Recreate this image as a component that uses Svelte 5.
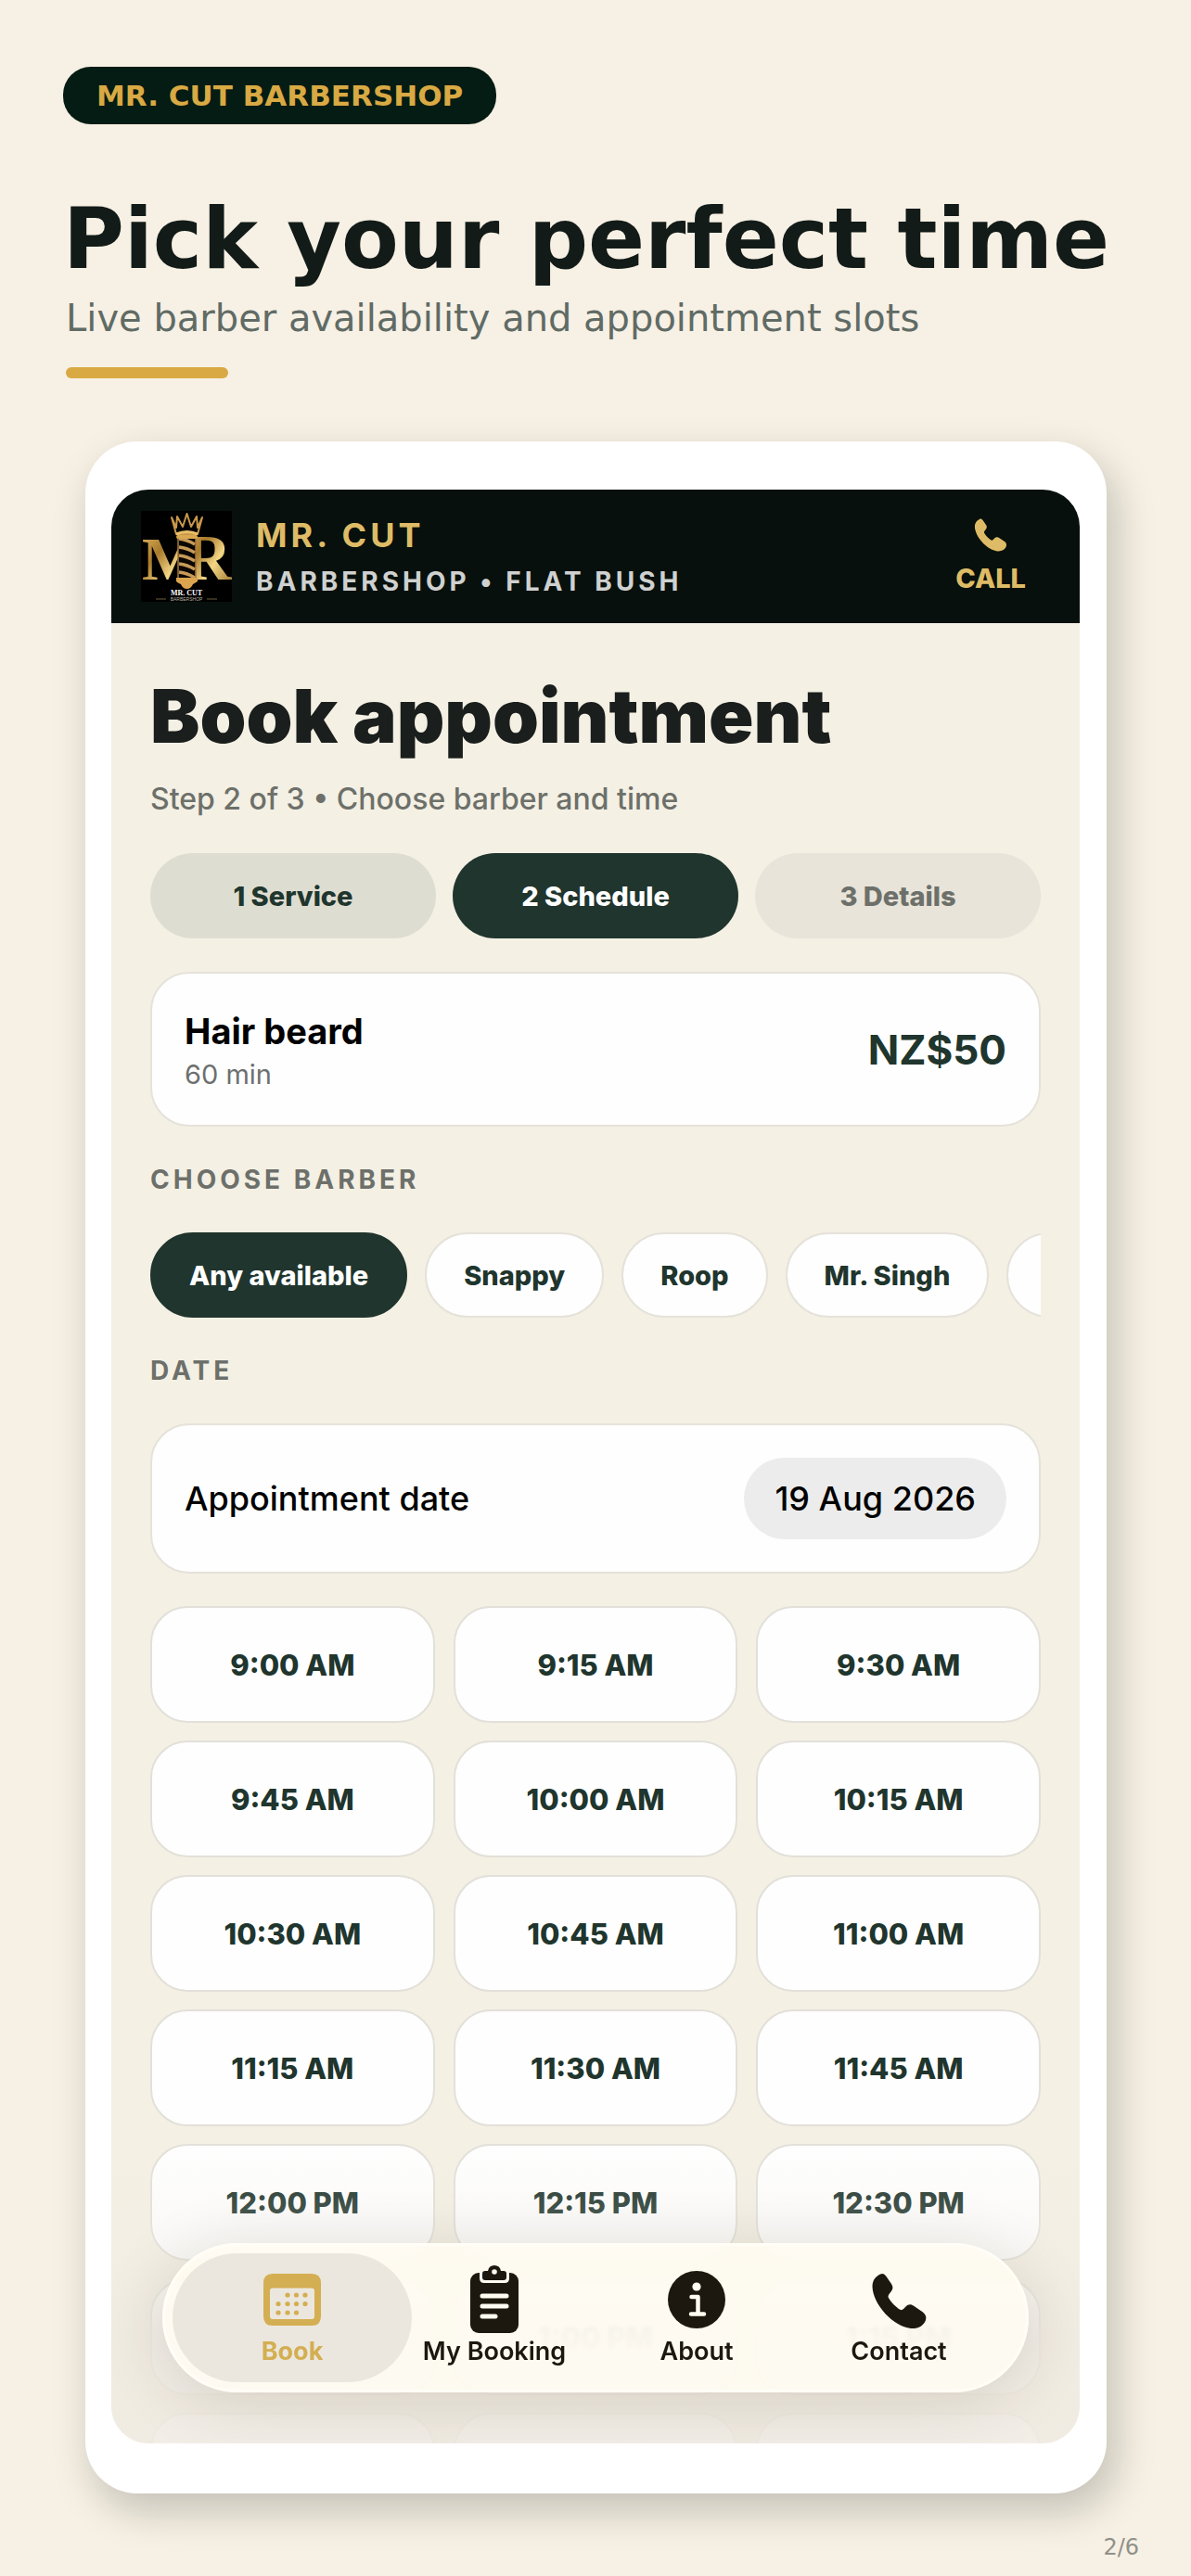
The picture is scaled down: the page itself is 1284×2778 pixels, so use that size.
<script>
  const steps = [
    { label: '1 Service', state: 'done' },
    { label: '2 Schedule', state: 'current' },
    { label: '3 Details', state: 'next' }
  ];
  const barbers = ['Any available', 'Snappy', 'Roop', 'Mr. Singh', 'More'];
  let barber = $state('Any available');

  const slots = Array.from({ length: 21 }, (_, i) => {
    const minutes = 9 * 60 + i * 15;
    const hour = Math.floor(minutes / 60);
    const mm = String(minutes % 60).padStart(2, '0');
    return `${hour > 12 ? hour - 12 : hour}:${mm} ${hour < 12 ? 'AM' : 'PM'}`;
  });

  const tabs = [
    { id: 'book', label: 'Book' },
    { id: 'booking', label: 'My Booking' },
    { id: 'about', label: 'About' },
    { id: 'contact', label: 'Contact' }
  ];
</script>

{#snippet phone()}
  <path d="M10 1.5C5 4 1.500 8 1.500 15C2 34 24 58 43 60C51 60.500 57 57 59 51C60 47.500 59 45 56 42.500L46.500 36C43 33.500 40 34 37.500 36.500L35 39C33.500 40.500 32 40.500 30 39C26 36 22 32 19.500 28C18 26 18.500 24.500 19.500 23L21.500 20.500C24 17.500 24 15 22 12L16.500 4C14.500 1 12.500 0.300 10 1.500Z" fill="currentColor" />
{/snippet}

<div class="page">
  <span class="tag">MR. CUT BARBERSHOP</span>
  <h1>Pick your perfect time</h1>
  <p class="lead">Live barber availability and appointment slots</p>
  <div class="rule"></div>

  <div class="frame">
    <div class="screen">
      <header>
        <svg class="logo" viewBox="0 0 98 98" role="img" aria-label="Mr. Cut logo">
          <defs>
            <linearGradient id="gold" x1="0" y1="0" x2="1" y2="1">
              <stop offset="0" stop-color="#e9c069" />
              <stop offset=".35" stop-color="#a87a2c" />
              <stop offset=".6" stop-color="#f3d685" />
              <stop offset="1" stop-color="#8a5f1d" />
            </linearGradient>
          </defs>
          <rect width="98" height="98" fill="#000" />
          <g fill="url(#gold)" font-family="Liberation Serif, serif" font-weight="700">
            <text x="1" y="74" font-size="66">M</text>
            <text x="47" y="74" font-size="70">R</text>
          </g>
          <path d="M33 7L38 18L39 6L45 17L49.500 3L54 17L60 6L61 18L66 7L61 25H38Z" fill="#000" stroke="#c8984a" stroke-width="2" stroke-linejoin="round" />
          <path d="M38 25Q49.500 20 61 25" fill="none" stroke="#e9c069" stroke-width="3" />
          <rect x="40" y="27" width="19" height="46" fill="#0b0703" stroke="#a87a3c" stroke-width="1.500" />
          <g stroke="#c79a58" stroke-width="3.500" fill="none">
            <path d="M41 30Q50 31 58 36M41 39Q50 40 58 45M41 48Q50 49 58 54M41 57Q50 58 58 63M41 66Q50 67 58 72" />
          </g>
          <rect x="38" y="26" width="23" height="4" rx="2" fill="#d9a850" />
          <path d="M38 72H61V76Q58 78 56 79Q54 84 49.500 84Q45 84 43 79Q40 78 38 76Z" fill="#dca44e" />
          <text x="49" y="91" font-size="8" font-weight="700" font-family="Liberation Serif, serif" fill="#fff" text-anchor="middle">MR. CUT</text>
          <text x="49" y="97" font-size="5" font-family="Liberation Sans, sans-serif" fill="#b9b1a2" text-anchor="middle">BARBERSHOP</text>
          <path d="M16 95H27M71 95H82" stroke="#6d5c3c" />
        </svg>
        <div class="brand">
          <strong>MR. CUT</strong>
          <span>BARBERSHOP • FLAT BUSH</span>
        </div>
        <a class="call" href="tel:">
          <svg viewBox="0 0 61 61" aria-hidden="true">{@render phone()}</svg>
          <span>CALL</span>
        </a>
      </header>

      <main>
        <div class="heading">
          <h2>Book appointment</h2>
          <p>Step 2 of 3 • Choose barber and time</p>
        </div>

        <div class="steps">
          {#each steps as step}
            <button type="button" class={step.state} aria-current={step.state === 'current' ? 'step' : undefined}>{step.label}</button>
          {/each}
        </div>

        <section class="card">
          <div>
            <h3>Hair beard</h3>
            <p>60 min</p>
          </div>
          <span class="price">NZ$50</span>
        </section>

        <h4>CHOOSE BARBER</h4>
        <div class="chips">
          {#each barbers as name}
            <button type="button" class:selected={barber === name} aria-pressed={barber === name} onclick={() => (barber = name)}>{name}</button>
          {/each}
        </div>

        <h4>DATE</h4>
        <div class="card date">
          <label for="date">Appointment date</label>
          <button type="button" id="date">19 Aug 2026</button>
        </div>

        <div class="slots">
          {#each slots as slot}
            <button type="button">{slot}</button>
          {/each}
        </div>
      </main>

      <div class="fade"></div>

      <nav>
        {#each tabs as tab}
          <a href="#{tab.id}" class:active={tab.id === 'book'}>
            {#if tab.id === 'book'}
              <svg viewBox="0 0 74 74" aria-hidden="true">
                <path fill="currentColor" fill-rule="evenodd" d="M16 9H58Q68 9 68 19V55Q68 65 58 65H16Q6 65 6 55V19Q6 9 16 9ZM16 24.500Q13 24.500 13 27.500V55Q13 58 16 58H58Q61 58 61 55V27.500Q61 24.500 58 24.500Z" />
                <g fill="currentColor">
                  {#each [[32, 32], [41.5, 32], [51, 32], [22, 41.5], [32, 41.5], [41.5, 41.5], [51, 41.5], [22, 51], [32, 51], [41.5, 51]] as [cx, cy]}
                    <circle {cx} {cy} r="2.600" />
                  {/each}
                </g>
              </svg>
            {:else if tab.id === 'booking'}
              <svg viewBox="0 0 74 74" aria-hidden="true">
                <rect x="11" y="8" width="52" height="65" rx="9" fill="currentColor" />
                <path d="M21 7V14Q21 19 26 19H48Q53 19 53 14V7" fill="#fffcf2" />
                <path d="M27 6H30Q31 0 37 0Q43 0 44 6H47Q50 6 50 9V13Q50 16 47 16H27Q24 16 24 13V9Q24 6 27 6Z" fill="currentColor" />
                <circle cx="37" cy="7" r="2.800" fill="#fffcf2" />
                <path d="M24 33H50M24 44H50M24 55H38" stroke="#fffcf2" stroke-width="5" stroke-linecap="round" />
              </svg>
            {:else if tab.id === 'about'}
              <svg viewBox="0 0 74 74" aria-hidden="true">
                <circle cx="37" cy="37" r="31" fill="currentColor" />
                <circle cx="37" cy="23" r="4.600" fill="#fffcf2" />
                <path d="M31.500 34H38.500V52M31 52.500H45" fill="none" stroke="#fffcf2" stroke-width="4.500" stroke-linecap="round" stroke-linejoin="round" />
              </svg>
            {:else}
              <svg viewBox="-7 -8 74 74" aria-hidden="true">{@render phone()}</svg>
            {/if}
            <span>{tab.label}</span>
          </a>
        {/each}
      </nav>
    </div>
  </div>

  <footer>2/6</footer>
</div>

<style>
  :global(body) {
    background: #f7f0e4;
  }
  .page {
    box-sizing: border-box;
    height: 100vh;
    padding: 72px 56px 16px 68px;
    display: flex;
    flex-direction: column;
    background: #f7f0e4;
    font-family: 'DejaVu Sans', sans-serif;
  }
  h1, h2, h3, h4, p {
    margin: 0;
  }
  button {
    margin: 0;
    padding: 0;
    border: 0;
    font: inherit;
    cursor: pointer;
  }
  a {
    text-decoration: none;
  }
  .tag {
    align-self: flex-start;
    padding: 0 36px;
    border-radius: 30px;
    background: #051c14;
    color: #d9a943;
    font-size: 31px;
    font-weight: 700;
    line-height: 62px;
  }
  h1 {
    margin-top: 72px;
    color: #121b18;
    font-size: 90px;
    font-weight: 700;
    line-height: 104px;
    white-space: nowrap;
  }
  .lead {
    margin: 9px 0 29px 3px;
    color: #606b65;
    font-size: 40px;
    line-height: 48px;
  }
  .rule {
    flex: none;
    width: 175px;
    height: 12px;
    margin-left: 3px;
    border-radius: 6px;
    background: #d9a943;
  }
  .frame {
    flex: 1;
    min-height: 0;
    margin: 68px 35px 43px 24px;
    padding: 52px 29px 54px 28px;
    box-sizing: border-box;
    display: flex;
    border-radius: 56px;
    background: #fff;
    box-shadow: 9px 18px 44px rgba(10, 24, 16, 0.22);
  }
  .screen {
    position: relative;
    flex: 1;
    min-width: 0;
    display: flex;
    flex-direction: column;
    overflow: hidden;
    border-radius: 40px;
    background: #f4f0e4;
    font-family: Inter, sans-serif;
  }
  header {
    flex: none;
    display: flex;
    align-items: center;
    padding: 22px 58px 22px 32px;
    background: #07100c;
  }
  .logo {
    width: 98px;
    height: 98px;
  }
  .brand {
    flex: 1;
    display: flex;
    flex-direction: column;
    margin-left: 26px;
  }
  .brand strong {
    color: #debb66;
    font-size: 36px;
    font-weight: 700;
    line-height: 54px;
    letter-spacing: 4px;
  }
  .brand span {
    color: #cfd1d0;
    font-size: 28px;
    font-weight: 700;
    line-height: 46px;
    letter-spacing: 4px;
  }
  .call {
    display: flex;
    flex-direction: column;
    align-items: center;
    gap: 12px;
    color: #debb66;
    font-size: 29px;
    font-weight: 800;
    line-height: 34px;
  }
  .call svg {
    width: 36px;
    height: 36px;
  }
  main {
    flex: 1;
    min-height: 0;
    overflow: hidden;
    padding: 52px 42px 0;
  }
  h2 {
    color: #1a1e1c;
    font-size: 80px;
    font-weight: 900;
    line-height: 96px;
  }
  .heading p {
    margin-top: 20px;
    color: #6d706a;
    font-size: 32px;
    font-weight: 500;
    line-height: 44px;
  }
  .steps {
    display: grid;
    grid-template-columns: repeat(3, 1fr);
    gap: 18px;
    margin: 36px 0;
  }
  .steps button {
    height: 92px;
    border-radius: 46px;
    font-size: 29px;
    font-weight: 800;
  }
  .steps .done {
    background: #deddd1;
    color: #20352d;
  }
  .steps .current {
    background: #20352d;
    color: #fff;
  }
  .steps .next {
    background: #e8e4d9;
    color: #6d706a;
  }
  .card {
    box-sizing: border-box;
    min-height: 167px;
    padding: 0 35px;
    display: flex;
    align-items: center;
    justify-content: space-between;
    border: 2px solid #e5e2da;
    border-radius: 42px;
    background: #fefefe;
  }
  h3 {
    color: #000;
    font-size: 38px;
    font-weight: 700;
    line-height: 54px;
  }
  .card p {
    color: #6d706f;
    font-size: 29px;
    line-height: 40px;
  }
  .price {
    color: #20352d;
    font-size: 44px;
    font-weight: 700;
  }
  h4 {
    margin: 36px 0;
    color: #6d706a;
    font-size: 28px;
    font-weight: 700;
    line-height: 42px;
    letter-spacing: 4px;
  }
  .chips {
    display: flex;
    gap: 19px;
    overflow: hidden;
  }
  .chips button {
    flex: none;
    box-sizing: border-box;
    height: 92px;
    padding: 0 40px;
    border: 2px solid #e5e2da;
    border-radius: 46px;
    background: #fefefe;
    color: #20352d;
    font-size: 29px;
    font-weight: 800;
  }
  .chips .selected {
    border-color: #20352d;
    background: #20352d;
    color: #fff;
  }
  .date {
    min-height: 162px;
    color: #000;
    font-size: 36px;
    font-weight: 500;
  }
  .date button {
    height: 88px;
    padding: 0 33px;
    border-radius: 44px;
    background: #ececec;
    color: #000;
  }
  .slots {
    margin-top: 35px;
    display: grid;
    grid-template-columns: repeat(3, 1fr);
    gap: 19px 20px;
  }
  .slots button {
    box-sizing: border-box;
    height: 126px;
    border: 2px solid #e2e0d9;
    border-radius: 40px;
    background: #fefefe;
    color: #20352d;
    font-size: 31px;
    font-weight: 800;
  }
  .fade {
    position: absolute;
    inset: auto 0 0;
    height: 320px;
    background: linear-gradient(rgba(240, 235, 226, 0), rgba(240, 235, 226, 0.3) 38%, rgba(240, 235, 226, 0.84) 66%, rgba(240, 235, 226, 0.84));
    pointer-events: none;
  }
  nav {
    position: absolute;
    inset: auto 55px 55px;
    box-sizing: border-box;
    height: 161px;
    padding: 8px 28px;
    display: flex;
    border: 3px solid #fffdf6;
    border-radius: 81px;
    background: rgba(255, 252, 242, 0.86);
    box-shadow: 0 10px 70px rgba(40, 30, 10, 0.14);
    backdrop-filter: blur(2px);
  }
  nav a {
    position: relative;
    flex: 1 1 0;
    min-width: 0;
    display: flex;
    flex-direction: column;
    align-items: center;
    padding-top: 13px;
    color: #1c180f;
    font-size: 27px;
    font-weight: 600;
    line-height: 38px;
    white-space: nowrap;
  }
  nav a.active {
    color: #d4ae52;
    font-weight: 700;
  }
  nav a.active::before {
    content: '';
    position: absolute;
    inset: 0 -20px;
    border-radius: 70px;
    background: rgba(233, 229, 220, 0.9);
  }
  nav svg,
  nav span {
    position: relative;
  }
  nav svg {
    width: 74px;
    height: 74px;
  }
  footer {
    align-self: flex-end;
    color: #8f918a;
    font-size: 24px;
    line-height: 30px;
  }
</style>
